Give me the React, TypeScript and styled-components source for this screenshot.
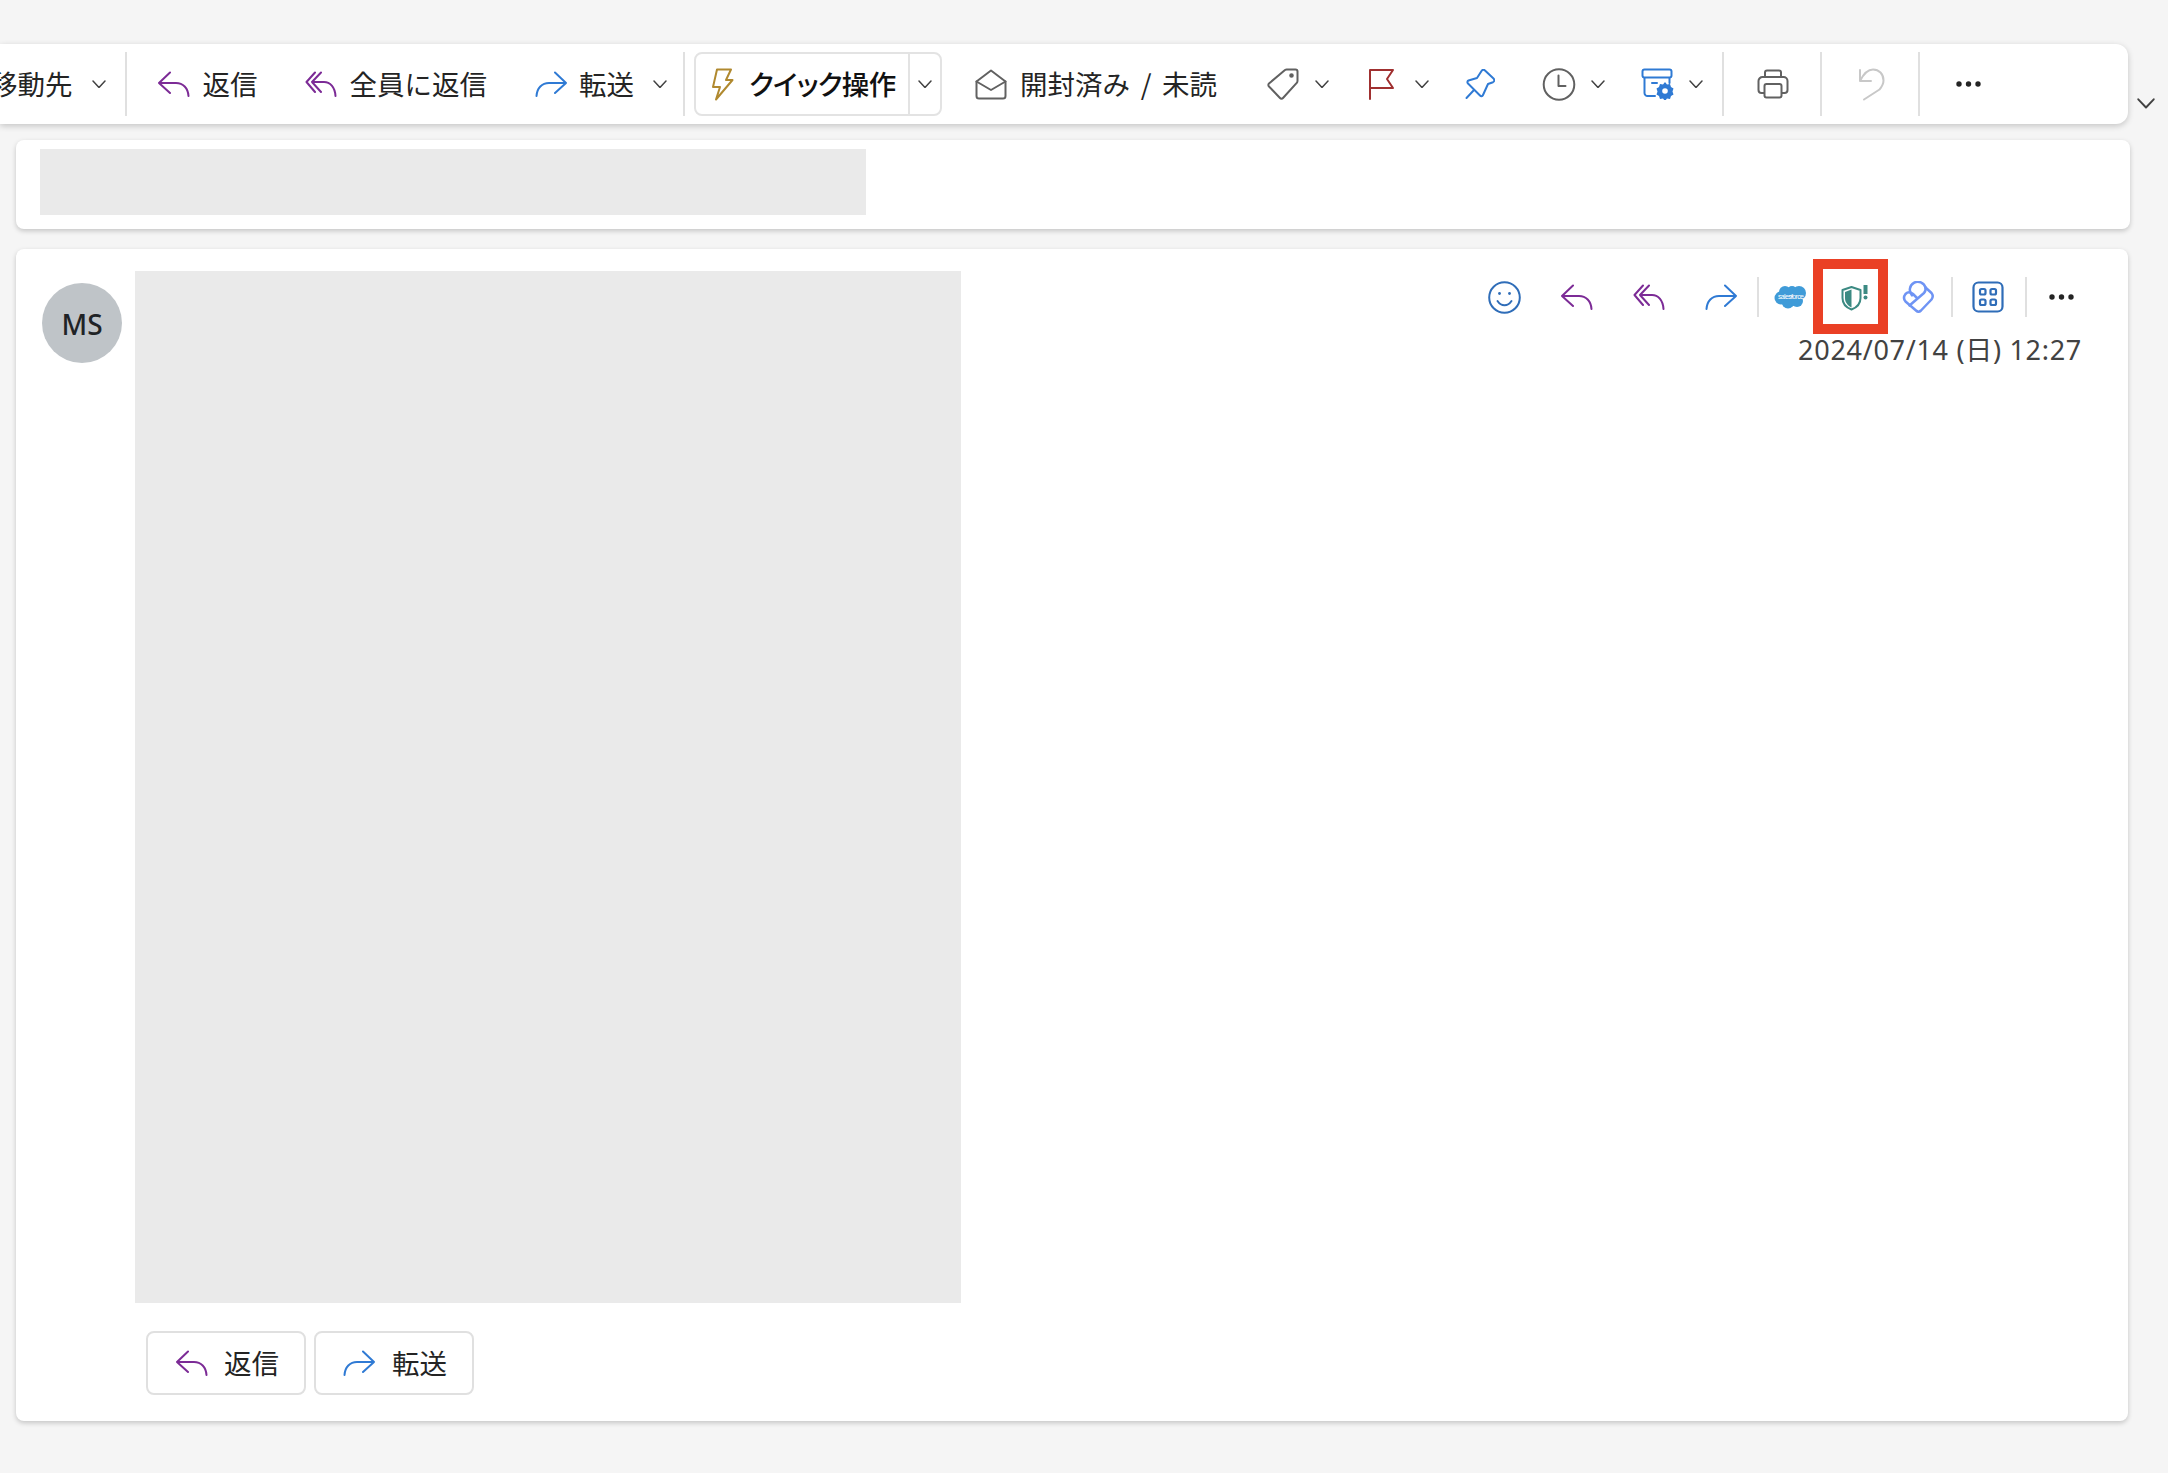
import React from 'react';
import styled, { createGlobalStyle } from 'styled-components';

const GlobalStyle = createGlobalStyle`
	html, body {
		margin: 0;
		padding: 0;
		background: #f5f5f5;
		color: #242424;
		font-family: "Noto Sans", "Noto Sans CJK JP", sans-serif;
	}
	* {
		box-sizing: border-box;
	}
`;

const PURPLE = '#7c2b96';
const BLUE = '#2f7ad4';
const GREY = '#616161';
const NAVY = '#2f6db8';

const Page = styled.div`
	width: 2168px;
	height: 1473px;
	padding-top: 44px;
	overflow: hidden;
`;
const TopRow = styled.div`
	display: flex;
	align-items: flex-end;
`;
const Toolbar = styled.div`
	display: flex;
	align-items: center;
	width: 2128px;
	height: 80px;
	background: #fff;
	border-radius: 0 12px 12px 0;
	box-shadow: 0 2px 6px rgba(0, 0, 0, 0.2);
	overflow: hidden;
	flex: none;
`;
const Expand = styled.span`
	display: flex;
	margin: 0 0 15px 9px;
`;
const Action = styled.span<{ $ml?: number; $gap?: number }>`
	display: inline-flex;
	align-items: center;
	flex: none;
	gap: ${p => p.$gap ?? 14}px;
	margin-left: ${p => p.$ml ?? 0}px;
`;
const Label = styled.span<{ $strong?: boolean }>`
	position: relative;
	top: -1px;
	font-family: "Noto Sans CJK JP", "Noto Sans", sans-serif;
	font-size: 27.5px;
	line-height: 40px;
	white-space: nowrap;
	word-spacing: 4.5px;
	letter-spacing: ${p => (p.$strong ? '-0.6px' : 'normal')};
	color: ${p => (p.$strong ? '#111' : '#242424')};
	font-weight: ${p => (p.$strong ? 500 : 400)};
	font-feature-settings: ${p => (p.$strong ? '"palt"' : 'normal')};
`;
const Divider = styled.span<{ $ml: number; $h?: number }>`
	flex: none;
	width: 2px;
	height: ${p => p.$h ?? 64}px;
	margin-left: ${p => p.$ml}px;
	background: #e0e0e0;
`;
const SplitButton = styled.div`
	display: flex;
	align-items: center;
	flex: none;
	width: 248px;
	height: 64px;
	margin-left: 9px;
	border: 2px solid #e3e3e3;
	border-radius: 8px;
`;
const SplitMain = styled.span`
	display: inline-flex;
	align-items: center;
	gap: 15px;
	width: 214px;
	height: 100%;
	padding-left: 15px;
	border-right: 2px solid #e3e3e3;
`;
const SplitArrow = styled.span`
	display: flex;
	flex: 1;
	justify-content: center;
`;
const Card = styled.section<{ $w: number }>`
	width: ${p => p.$w}px;
	margin-left: 16px;
	background: #fff;
	border-radius: 8px;
	box-shadow: 0 2px 5px rgba(0, 0, 0, 0.2);
`;
const SubjectCard = styled(Card)`
	height: 89px;
	margin-top: 16px;
	padding: 9px 24px;
`;
const SubjectMask = styled.div`
	width: 826px;
	height: 66px;
	background: #eaeaea;
`;
const MessageCard = styled(Card)`
	display: flex;
	height: 1172px;
	margin-top: 20px;
	padding: 22px 46px 0 26px;
`;
const Avatar = styled.div`
	display: flex;
	align-items: center;
	justify-content: center;
	flex: none;
	width: 80px;
	height: 80px;
	margin-top: 12px;
	padding-top: 1px;
	border-radius: 50%;
	background: #bfc4c8;
	font-size: 28px;
	font-weight: 500;
	color: #1f2326;
`;
const Body = styled.div`
	flex: none;
	width: 826px;
	margin-left: 13px;
`;
const BodyMask = styled.div`
	height: 1032px;
	background: #eaeaea;
`;
const Replies = styled.div`
	display: flex;
	gap: 8px;
	margin: 28px 0 0 11px;
`;
const ReplyButton = styled.button`
	display: inline-flex;
	align-items: center;
	gap: 16px;
	width: 160px;
	height: 64px;
	padding: 0 0 0 27px;
	background: #fff;
	border: 2px solid #e0e0e0;
	border-radius: 8px;
`;
const Side = styled.div`
	display: flex;
	flex-direction: column;
	align-items: flex-end;
	flex: 1;
	padding-top: 6px;
`;
const IconRow = styled.div`
	display: flex;
	align-items: center;
	height: 40px;
	margin-right: 8px;
`;
const Slot = styled.span<{ $ml?: number }>`
	display: flex;
	flex: none;
	position: relative;
	margin-left: ${p => p.$ml ?? 0}px;
`;
const Marker = styled.span`
	position: absolute;
	left: -28px;
	top: -25px;
	width: 75px;
	height: 75px;
	border: 10px solid #ea4025;
`;
const Sent = styled.div`
	margin-top: 16px;
	font-size: 27px;
	line-height: 34px;
	letter-spacing: 0.7px;
	color: #424242;
	white-space: nowrap;
`;
const Line = styled.svg<{ $c?: string; $sw?: number }>`
	display: block;
	flex: none;
	fill: none;
	stroke: ${p => p.$c ?? GREY};
	stroke-width: ${p => p.$sw ?? 2};
	stroke-linecap: round;
	stroke-linejoin: round;
`;

const Chevron = ({ w = 14 }: { w?: number }) => (
	<Line $c="#424242" $sw={1.5} width={w} height={w * 0.6} viewBox="0 0 14 8.4">
		<path d="M1 1l6 6.400L13 1" />
	</Line>
);
const Reply = ({ c = PURPLE }: { c?: string }) => (
	<Line $c={c} width={33} height={26} viewBox="0 0 33 26">
		<path d="M13 1.500L2 12l11 10M2 12h17c7 0 12 5 12.500 13" />
	</Line>
);
const ReplyAll = () => (
	<Line $c={PURPLE} width={32} height={26} viewBox="0 0 32 26">
		<path d="M10 1.500L1.500 11 10 21M16 1.500L7 11l9 10M7 11h12c6 0 11 5 11.500 14" />
	</Line>
);
const Forward = () => (
	<Line $c={BLUE} width={33} height={26} viewBox="0 0 33 26">
		<path d="M20 1.500L31 12 20 22M31 12H14C7 12 2 17 1.500 25" />
	</Line>
);
const Bolt = () => (
	<Line $c="#b0892f" width={23} height={33} viewBox="0 0 23 33">
		<path d="M6 1.500h14L15 12h6.500L5 31.500 9 19H2z" />
	</Line>
);
const MailOpen = () => (
	<Line width={32} height={31} viewBox="0 0 32 31">
		<path d="M1.500 12.500L16 1.500l14.500 11V27a2.500 2.500 0 0 1-2.500 2.500H4A2.500 2.500 0 0 1 1.500 27z" />
		<path d="M1.500 12.500L16 21l14.500-8.500" />
	</Line>
);
const Tag = () => (
	<Line width={32} height={32} viewBox="0 0 32 32">
		<path d="M20 1.500h8.500a2 2 0 0 1 2 2V13a3 3 0 0 1-1 2.200L16 30a2 2 0 0 1-3 0L2 18.500a2 2 0 0 1 0-3L18 2a3 3 0 0 1 2-.5z" />
		<circle cx="24.500" cy="7.500" r="1.300" fill={GREY} />
	</Line>
);
const Flag = () => (
	<Line $c="#a03030" width={27} height={32} viewBox="0 0 27 32">
		<path d="M2 31V2h23l-6 9 6 9H2" />
	</Line>
);
const Pin = () => (
	<Line $c={BLUE} width={30} height={31} viewBox="0 0 30 31">
		<path d="M16.500 2c1-1.500 2.500-1.500 3.500-.5l8.500 8c1.200 1.200 1 3-.5 3.700L23 15l-5 11c-.7 1.500-2 1.500-3 .5L3 14.500c-1-1-.7-2.500.5-3L12 9z" />
		<path d="M9 21l-7.500 8" />
	</Line>
);
const Clock = () => (
	<Line width={34} height={33} viewBox="0 0 34 33">
		<circle cx="17" cy="16.500" r="15.300" />
		<path d="M16.500 7.500V18h7" />
	</Line>
);
const ArchiveGear = () => (
	<Line $c={BLUE} width={33} height={32} viewBox="0 0 33 32">
		<rect x="1.500" y="1.500" width="29" height="8" rx="2" />
		<path d="M3.500 10v15a3 3 0 0 0 3 3H14M28.500 10v5M11 15h5" />
		<path
			fill={BLUE}
			stroke="none"
			d="M24 14l2 2.500 3-.6 1 3.100 2.500 1.500-1 3 1 3-2.500 1.500-1 3-3-.5-2 2.500-2-2.500-3 .5-1-3-2.500-1.500 1-3-1-3 2.500-1.500 1-3.100 3 .6z"
		/>
		<circle cx="24" cy="23" r="2.800" fill="#fff" stroke="none" />
	</Line>
);
const Printer = () => (
	<Line width={32} height={30} viewBox="0 0 32 30">
		<path d="M8 8V3.500a2 2 0 0 1 2-2h12a2 2 0 0 1 2 2V8" />
		<path d="M7 24H4.500a3 3 0 0 1-3-3v-9a4 4 0 0 1 4-4h21a4 4 0 0 1 4 4v9a3 3 0 0 1-3 3H25" />
		<rect x="7.500" y="15" width="17" height="13.500" rx="2" />
	</Line>
);
const Undo = () => (
	<Line $c="#c8c8c8" width={27} height={33} viewBox="0 0 27 33">
		<path d="M2 2v11h11M2 13C6 5 10 1.500 15 1.500c6 0 10.500 4.500 10.500 11 0 3.500-1.500 6-4 9L6 31.500" />
	</Line>
);
const Dots = ({ w = 25 }: { w?: number }) => (
	<svg width={w} height={6} viewBox="0 0 25 6" fill="#242424">
		<circle cx="3" cy="3" r="2.700" />
		<circle cx="12.500" cy="3" r="2.700" />
		<circle cx="22" cy="3" r="2.700" />
	</svg>
);
const Smile = () => (
	<Line $c={NAVY} width={33} height={33} viewBox="0 0 33 33">
		<circle cx="16.500" cy="16.500" r="15.300" />
		<path d="M9.500 20c2 3 4.500 4.300 7 4.300s5-1.300 7-4.300" />
		<circle cx="11.500" cy="12.500" r="1.400" fill={NAVY} stroke="none" />
		<circle cx="21.500" cy="12.500" r="1.400" fill={NAVY} stroke="none" />
	</Line>
);
const Salesforce = () => (
	<svg width={34} height={24} viewBox="0 0 34 24" fill="#3f9bd8">
		<circle cx="11" cy="7" r="6" />
		<circle cx="18" cy="6" r="5" />
		<circle cx="25" cy="8" r="7" />
		<circle cx="7" cy="13" r="6.500" />
		<circle cx="14" cy="17" r="6.500" />
		<circle cx="23" cy="16" r="6" />
		<text x="4" y="14" textLength="26" fontSize="7" fontFamily="Liberation Sans, sans-serif" fill="#fff">
			salesforce
		</text>
	</svg>
);
const Shield = () => (
	<Line $c="#3c8a83" width={27} height={27} viewBox="0 0 27 27">
		<path d="M10.500 3L1.500 6v8c0 5.500 3.500 9.500 9 11.500 5.500-2 9-6 9-11.500V6z" />
		<path fill="#3c8a83" stroke="none" d="M10.500 5.500v18C7 21.700 4 18.500 4 14V8z" />
		<path d="M24.500 1v9" strokeWidth={4} strokeLinecap="butt" />
		<circle cx="24.500" cy="13.500" r="2" fill="#3c8a83" stroke="none" />
	</Line>
);
const Viva = () => (
	<Line $c="#6f94f4" $sw={2.500} width={33} height={33} viewBox="0 0 33 33">
		<path d="M10 14.300A8 8 0 1 1 23.500 6.500" />
		<path d="M23.500 6.500l6 5.500q2.500 3 0 6.500L19 29.500q-2.500 2.500-5 0L3.500 20.500q-3-3.500 0-7.500 3.500-3.500 7.500 0l4 4" />
		<path d="M7.500 24.500L22 12q2-2 1.500-5.500" />
	</Line>
);
const Apps = () => (
	<Line $c={NAVY} $sw={2.200} width={32} height={32} viewBox="0 0 32 32">
		<rect x="1.500" y="1.500" width="29" height="29" rx="5" />
		<rect x="8" y="8" width="5.500" height="5.500" rx="1.500" />
		<rect x="18.500" y="8" width="5.500" height="5.500" rx="1.500" />
		<rect x="8" y="18.500" width="5.500" height="5.500" rx="1.500" />
		<rect x="18.500" y="18.500" width="5.500" height="5.500" rx="1.500" />
	</Line>
);

export default function App() {
	return (
		<Page>
			<GlobalStyle />
			<TopRow>
				<Toolbar>
					<Action $ml={-10} $gap={19}>
						<Label>移動先</Label>
						<Chevron />
					</Action>
					<Divider $ml={19} />
					<Action $ml={30} $gap={13}>
						<Reply />
						<Label>返信</Label>
					</Action>
					<Action $ml={47} $gap={13}>
						<ReplyAll />
						<Label>全員に返信</Label>
					</Action>
					<Action $ml={48} $gap={19}>
						<Action $gap={11}>
							<Forward />
							<Label>転送</Label>
						</Action>
						<Chevron />
					</Action>
					<Divider $ml={16} />
					<SplitButton>
						<SplitMain>
							<Bolt />
							<Label $strong>クイック操作</Label>
						</SplitMain>
						<SplitArrow>
							<Chevron />
						</SplitArrow>
					</SplitButton>
					<Action $ml={33} $gap={13}>
						<MailOpen />
						<Label>開封済み / 未読</Label>
					</Action>
					<Action $ml={50} $gap={16}>
						<Tag />
						<Chevron />
					</Action>
					<Action $ml={39} $gap={20}>
						<Flag />
						<Chevron />
					</Action>
					<Action $ml={36}>
						<Pin />
					</Action>
					<Action $ml={47} $gap={15}>
						<Clock />
						<Chevron />
					</Action>
					<Action $ml={36} $gap={15}>
						<ArchiveGear />
						<Chevron />
					</Action>
					<Divider $ml={19} />
					<Action $ml={33}>
						<Printer />
					</Action>
					<Divider $ml={31} />
					<Action $ml={36}>
						<Undo />
					</Action>
					<Divider $ml={33} />
					<Action $ml={36}>
						<Dots />
					</Action>
				</Toolbar>
				<Expand>
					<Chevron w={18} />
				</Expand>
			</TopRow>
			<SubjectCard $w={2114}>
				<SubjectMask />
			</SubjectCard>
			<MessageCard $w={2112}>
				<Avatar>MS</Avatar>
				<Body>
					<BodyMask />
					<Replies>
						<ReplyButton>
							<Reply />
							<Label>返信</Label>
						</ReplyButton>
						<ReplyButton>
							<Forward />
							<Label>転送</Label>
						</ReplyButton>
					</Replies>
				</Body>
				<Side>
					<IconRow>
						<Slot>
							<Smile />
						</Slot>
						<Slot $ml={39}>
							<Reply />
						</Slot>
						<Slot $ml={40}>
							<ReplyAll />
						</Slot>
						<Slot $ml={40}>
							<Forward />
						</Slot>
						<Divider $ml={19} $h={40} />
						<Slot $ml={15}>
							<Salesforce />
						</Slot>
						<Slot $ml={33}>
							<Shield />
							<Marker />
						</Slot>
						<Slot $ml={34}>
							<Viva />
						</Slot>
						<Divider $ml={16} $h={40} />
						<Slot $ml={19}>
							<Apps />
						</Slot>
						<Divider $ml={21} $h={40} />
						<Slot $ml={22}>
							<Dots />
						</Slot>
					</IconRow>
					<Sent>2024/07/14 (日) 12:27</Sent>
				</Side>
			</MessageCard>
		</Page>
	);
}
